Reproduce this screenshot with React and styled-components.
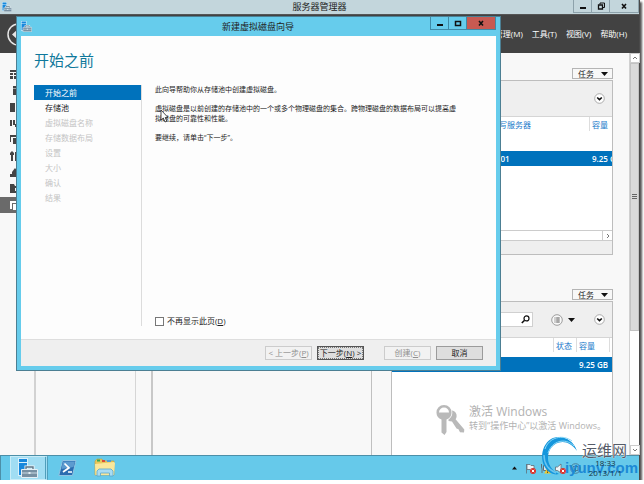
import { useState } from 'react';
import styled, { createGlobalStyle, css } from 'styled-components';

const GlobalStyle = createGlobalStyle`
    * {
        box-sizing: border-box;
    }
    body {
        margin: 0;
        background: #fff;
        color: #222;
        font-family: "Open Sans", "Noto Sans CJK SC", sans-serif;
        font-size: 8px;
        line-height: 10px;
        overflow: hidden;
    }
    button, input {
        font: inherit;
        color: inherit;
        margin: 0;
        padding: 0;
    }
    svg {
        display: block;
        flex: none;
    }
`;

const Screen = styled.div`
    position: relative;
    display: flex;
    flex-direction: column;
    height: calc(100vh - 4px);
    margin-right: 4px;
    border-right: 1px solid #4a4a4a;
    box-shadow: 2px 2px 2px #555;
`;
const TitleBar = styled.header`
    position: relative;
    flex: none;
    display: flex;
    align-items: center;
    height: 15px;
    padding-left: 2px;
    background: #c3d6dc;
    border-bottom: 1px solid #555;
`;
const WindowTitle = styled.h1`
    flex: 1;
    margin: 0;
    padding-left: 54px;
    font-size: 9px;
    line-height: 12px;
    font-weight: 400;
    text-align: center;
    color: #222;
`;
const WindowControls = styled.div`
    display: flex;
    align-self: flex-start;
    height: 13px;
    border: 1px solid ${({ $line }) => $line};
    border-top: 0;
`;
const ControlButton = styled.button`
    display: flex;
    align-items: center;
    justify-content: center;
    width: ${({ $wide }) => ($wide ? 28 : 18)}px;
    border: 0;
    border-right: 1px solid ${({ $line }) => $line};
    background: ${({ $close }) => ($close ? '#c75a52' : 'transparent')};

    &:last-child {
        border-right: 0;
    }
`;
const MenuBar = styled.nav`
    flex: none;
    display: flex;
    align-items: center;
    justify-content: space-between;
    height: 38px;
    padding: 0 12px 0 7px;
    background: #424242;
    color: #fff;
`;
const BackButton = styled.button`
    border: 0;
    background: none;
`;
const MenuList = styled.div`
    display: flex;
    gap: 9px;
`;
const MenuItem = styled.button`
    border: 0;
    background: none;
`;

const Workspace = styled.main`
    flex: 1;
    min-height: 0;
    display: flex;
    background: #f8f8f8;
`;
const Sidebar = styled.aside`
    flex: none;
    width: 34px;
    padding-top: 13px;
`;
const SidebarButton = styled.button`
    display: flex;
    align-items: center;
    width: 100%;
    height: 16px;
    padding-left: 10px;
    border: 0;
    background: ${({ $active }) => ($active ? '#6a6a6a' : 'transparent')};
    color: ${({ $active }) => ($active ? '#fff' : '#444')};
    margin-bottom: ${({ $gap }) => ($gap ? 1 : 0)}px;
`;
const PageNav = styled.div`
    flex: none;
    width: 102px;
    margin-right: 15px;
    border-left: 2px solid #d2d2d2;
    border-right: 1px solid #d6d6d6;
`;
const VolumesPane = styled.section`
    width: 0;
    flex: 109;
    margin-right: 19px;
    border-left: 2px solid #c8c8c8;
    border-right: 1px solid #c0c0c0;
`;
const DetailsPane = styled.div`
    flex: 111;
    min-width: 0;
    display: flex;
    flex-direction: column;
    padding-top: 15px;
    margin-right: 16px;
`;
const TaskButton = styled.button`
    flex: none;
    align-self: flex-end;
    display: flex;
    align-items: center;
    justify-content: space-between;
    width: 41px;
    height: 11px;
    padding: 0 4px 0 5px;
    margin-bottom: 1px;
    border: 1px solid #b5b5b5;
    background: #f8f8f8;
`;
const Panel = styled.section`
    display: flex;
    flex-direction: column;
    border: 1px solid #bdbdbd;
    background: #fff;

    ${({ $grow }) => ($grow ? css`
        flex: 1;
        border-bottom: 0;
    ` : css`
        flex: none;
        height: 175px;
        margin-bottom: 34px;
    `)}
`;
const PanelHeader = styled.div`
    flex: none;
    display: flex;
    align-items: center;
    justify-content: flex-end;
    height: 36px;
    padding-right: 7px;
    background: #efefef;
    border-bottom: 1px solid #d5d5d5;
`;
const SearchBox = styled.label`
    flex: 1;
    display: flex;
    align-items: center;
    height: 15px;
    margin: 0 18px 0 8px;
    padding-right: 2px;
    border: 1px solid #d0d0d0;
    background: #fff;
`;
const SearchInput = styled.input`
    flex: 1;
    min-width: 0;
    border: 0;
    background: none;
    outline: 0;
`;
const IconButton = styled.button`
    border: 0;
    background: none;
    margin-right: ${({ $space }) => $space || 0}px;
`;
const TableArea = styled.div`
    flex: 1;
    overflow: hidden;
`;
const Table = styled.table`
    width: 100%;
    table-layout: fixed;
    border-collapse: collapse;
`;
const HeadCell = styled.th`
    height: ${({ $tall }) => ($tall ? 34 : 19)}px;
    width: ${({ $width }) => ($width ? `${$width}px` : 'auto')};
    padding: 3px 0 0 3px;
    vertical-align: top;
    text-align: left;
    font-weight: 400;
    white-space: nowrap;
    color: #1979ca;
    background: linear-gradient(#ddd, #ddd) left top / 1px 14px no-repeat;
`;
const Cell = styled.td`
    height: 15px;
    padding: 0 0 0 3px;
    white-space: nowrap;
    font-weight: 600;
    color: #fff;
    background: #0072bc;
`;
const HorizontalScroll = styled.div`
    flex: none;
    display: flex;
    justify-content: flex-end;
    height: 11px;
    border-top: 1px solid #ccc;
    border-bottom: 1px solid #ccc;
`;
const ScrollButton = styled.button`
    flex: none;
    display: flex;
    align-items: center;
    justify-content: center;
    width: 10px;
    height: ${({ $side }) => ($side ? 9 : 10)}px;
    border: 1px solid #ccc;
    border-width: ${({ $side }) => ($side ? '0 0 0 1px' : '1px')};
    background: #fff;
`;
const PanelFooter = styled.div`
    flex: none;
    height: 13px;
    background: #efefef;
`;
const VerticalScroll = styled.div`
    flex: none;
    display: flex;
    flex-direction: column;
    width: 10px;
    border-left: 1px solid #d0d0d0;
    background: #fff;
`;
const ScrollThumb = styled.div`
    flex: 267;
    display: flex;
    align-items: center;
    justify-content: center;
    background: #dadada;
    border: 1px solid #c2c2c2;
`;
const ScrollTrack = styled.div`
    flex: 114;
`;

const Dialog = styled.div`
    position: absolute;
    top: 17px;
    left: 17px;
    right: 139px;
    bottom: 110px;
    display: flex;
    flex-direction: column;
    padding: 0 4px 4px;
    background: #66ccec;
    box-shadow: 0 0 0 1px #4c7f93;
`;
const DialogTitleBar = styled.header`
    position: relative;
    flex: none;
    display: flex;
    align-items: center;
    height: 19px;
`;
const DialogBody = styled.div`
    flex: 1;
    min-height: 0;
    display: flex;
    flex-direction: column;
    background: #fdfdfd;
    padding: 13px;
`;
const PageHeading = styled.h2`
    margin: 0 0 14px;
    font-size: 15px;
    line-height: 22px;
    font-weight: 400;
    color: #0f789b;
`;
const WizardColumns = styled.div`
    flex: 1;
    min-height: 0;
    display: flex;
`;
const StepList = styled.ol`
    flex: none;
    width: 108px;
    margin: 0 13px 0 0;
    padding: 0;
    list-style: none;
    border-right: 1px solid #dcdcdc;
`;
const Step = styled.li`
    height: 15px;
    line-height: 15px;
    padding-left: 11px;
    color: ${({ $state }) => ({ active: '#fff', ready: '#222' }[$state] || '#c4c4c4')};
    background: ${({ $state }) => ($state === 'active' ? '#0072bc' : 'transparent')};
`;
const StepContent = styled.div`
    flex: 1;
    display: flex;
    flex-direction: column;
    justify-content: space-between;
`;
const Text = styled.p`
    margin: 0 0 9px;
    font-size: 7px;
    line-height: 10px;
    white-space: nowrap;
`;
const SkipLabel = styled.label`
    display: flex;
    align-items: center;
    gap: 3px;
`;
const Checkbox = styled.input`
    appearance: none;
    width: 9px;
    height: 9px;
    border: 1px solid #777;
    background: ${({ checked }) => (checked ? '#0072bc' : '#fff')};
`;
const DialogFooter = styled.footer`
    flex: none;
    display: flex;
    align-items: center;
    justify-content: flex-end;
    gap: 5px;
    height: 27px;
    padding-right: 13px;
    background: #efefef;
    border-top: 1px solid #dedede;
`;
const FooterButton = styled.button`
    width: 47px;
    height: 14px;
    white-space: nowrap;
    line-height: 10px;
    border: 1px solid #9b9b9b;
    background: #dedede;
    margin-left: ${({ $apart }) => ($apart ? 15 : 0)}px;
    ${({ $primary }) => $primary && css`
        border-color: #555;
        outline: 1px dotted #777;
        outline-offset: -2px;
    `}

    &:disabled {
        border-color: #ccc;
        background: #f2f2f2;
        color: #8f8f8f;
    }
`;
const Pointer = styled.svg`
    position: absolute;
    left: 143px;
    top: 92px;
`;

const Activation = styled.div`
    position: absolute;
    right: 33px;
    bottom: 44px;
    display: flex;
    align-items: flex-start;
    gap: 3px;
    color: #b2b2b2;
`;
const ActivationTitle = styled.div`
    font-size: 12px;
    line-height: 16px;
`;
const ActivationText = styled.div`
    font-size: 9px;
    line-height: 12px;
    white-space: nowrap;
`;

const Taskbar = styled.footer`
    flex: none;
    display: flex;
    align-items: stretch;
    height: 25px;
    padding: 0 17px 0 9px;
    background: #66c9ea;
    border-top: 1px solid #4c8fa8;
    border-left: 1px solid #4c8fa8;
`;
const TaskbarButton = styled.button`
    display: flex;
    align-items: center;
    justify-content: center;
    width: 38px;
    border: 0;
    background: none;
    ${({ $active }) => $active && css`
        border: 1px solid #c7ecf8;
        border-right: 3px double #4f9fbc;
        background: #a0ddf3;
    `}
`;
const Tray = styled.div`
    display: flex;
    align-items: center;
    gap: 4px;
    margin-left: auto;
`;
const Clock = styled.time`
    position: relative;
    z-index: 1;
    margin-left: 4px;
    text-align: center;
    color: #17313c;
`;
const SiteBadge = styled.div`
    position: absolute;
    right: 1px;
    bottom: 4px;
    display: flex;
    align-items: flex-end;
`;
const SiteWords = styled.div`
    margin-left: -14px;
    text-shadow: 0 0 1px #fff, 0 0 1px #fff;
`;
const SiteName = styled.div`
    padding-left: 17px;
    font-size: 15px;
    line-height: 18px;
    color: #555b68;
`;
const SiteHost = styled.div`
    font-family: "Liberation Sans", sans-serif;
    font-size: 15px;
    line-height: 17px;
    font-weight: 700;
    color: #1c8ad6;
    text-shadow: none;
`;

const ServerIcon = ({ size }) => (
    <svg width={size} height={size} viewBox="0 0 20 20">
        <path d="M0 0h10v18H0z" fill="#d8f0fb" />
        <path d="M1 1h8v3H1zM1 5h8v12H1z" fill="#1888dc" />
        <path d="M8 12V9h7v3" fill="none" stroke="#f0f6f9" strokeWidth="3" />
        <path d="M8 12V9h7v3" fill="none" stroke="#5d7587" strokeWidth="1.4" />
        <path d="M3.500 11.500h16v8h-16z" fill="#7890a2" stroke="#e4eff5" />
        <path d="M4 15h15" stroke="#c9d9e2" />
        <path d="M10.500 14h2v2h-2z" fill="#e4eff5" />
    </svg>
);

const MinimizeIcon = () => (
    <svg width="8" height="8" viewBox="0 0 8 8"><path d="M1 5h6v2H1z" fill="#111" /></svg>
);
const MaximizeIcon = () => (
    <svg width="8" height="8" viewBox="0 0 8 8"><path d="M1.500 2.500h5v4h-5z" fill="none" stroke="#111" strokeWidth="1.5" /></svg>
);
const RestoreIcon = () => (
    <svg width="8" height="8" viewBox="0 0 8 8" fill="none" stroke="#111">
        <path d="M3 2.500V1h4.500v4.500H6" />
        <path d="M1.500 3h4v4h-4z" strokeWidth="1.300" />
    </svg>
);
const CloseIcon = () => (
    <svg width="8" height="8" viewBox="0 0 8 8"><path d="M2 2l4 4.500M6 2L2 6.500" stroke="#111" strokeWidth="1.600" /></svg>
);
const Triangle = ({ up }) => (
    <svg width={up ? 5 : 7} height="4" viewBox="0 0 7 4"><path d={up ? 'M0 4h7L3.500 0z' : 'M0 0h7L3.500 4z'} fill="#111" /></svg>
);
const Arrow = ({ d }) => (
    <svg width="6" height="6" viewBox="0 0 6 6"><path d={d} fill="none" stroke="#777" /></svg>
);
const CircleChevron = () => (
    <svg width="11" height="11" viewBox="0 0 11 11">
        <circle cx="5.500" cy="5.500" r="4.800" fill="#fff" stroke="#999" strokeWidth=".8" />
        <path d="M3.200 4.500l2.300 2.200 2.300-2.200" fill="none" stroke="#111" strokeWidth="1.600" />
    </svg>
);
const ListIcon = () => (
    <svg width="12" height="12" viewBox="0 0 12 12">
        <circle cx="6" cy="6" r="5.300" fill="#f8f8f8" stroke="#888" strokeWidth=".8" />
        <path d="M3.500 4h1M5.200 4h3.500M3.500 6h1M5.200 6h3.500M3.500 8h1M5.200 8h3.500" stroke="#555" />
    </svg>
);
const SearchIcon = () => (
    <svg width="9" height="9" viewBox="0 0 9 9" fill="none" stroke="#111">
        <circle cx="5.500" cy="3.400" r="2.500" strokeWidth="1.200" />
        <path d="M3.600 5.200L.8 8" strokeWidth="1.600" />
    </svg>
);

const sidebarShapes = [
    'M0 1h12v2H0zM0 4h3v2H0zM4 4h8v2H4zM0 7h3v3H0zM4 7h8v3H4z',
    'M3 1h8v2H3zM3 3.500h8V10H3z',
    'M0 1h5v9H0zM6 2h6v8H6z',
    'M0 2h2v6H0zM3 2h2v5H3zM6 1h5v4H6zM5 6h4v3H5z',
    'M0 1h7v2H1v5H0zM3 4h8v6H3z',
    'M0 2l2-2 2 2v2H3v6H1V4H0zM5 1h2v9H5z',
    'M2 5l3-4 3 4v2H2zM0 7h11v3H0z',
    'M0 1h4l1 2h6v7H0zm5 4v3h2V5z',
    'M0 1h7v2H2v6H0zM3 4h8v6H3z',
];

const KeysIcon = () => (
    <svg width="30" height="32" viewBox="0 0 30 32" fill="#b9b9b9">
        <path d="M8 1a7.500 7.500 0 0 1 7.500 8c0 3-2 5.500-5 6.500V28l-2 3-3-2.500V15.500C2.500 14.500.5 12 .5 9A7.500 7.500 0 0 1 8 1zm-5 7.500h10a5 5 0 0 0-10 0z" fillRule="evenodd" />
        <path d="M16 6.500c3 .5 5 3 4.600 6-.1 1-.4 2-1 2.800l8.700 10.200-.3 3-4-.3-1.500-3-2-.7-4.500-7-3.500-.5v-1.500c3-2 4.500-5 3.500-9z" />
    </svg>
);

const PowerShellIcon = () => (
    <svg width="19" height="16" viewBox="0 0 19 16">
        <path d="M4.500.5h13.500l-3.500 15H.8z" fill="#2b6cb0" stroke="#8fc3e2" />
        <path d="M5 1.500h12L15.500 7 3.500 9z" fill="#5d9bcf" />
        <path d="M6.500 3.500l4.500 4.300-6 4.200M10 12h4" fill="none" stroke="#fff" strokeWidth="1.700" />
    </svg>
);
const FolderIcon = () => (
    <svg width="22" height="20" viewBox="0 0 22 20">
        <path d="M1 3l2-2h5l1 2h11v14H1z" fill="#e8c75b" stroke="#c39d3c" strokeWidth=".6" />
        <path d="M3 1.500h3v2H3z" fill="#35a853" /><path d="M8 2h3v2H8z" fill="#d84c3a" /><path d="M13 2h4v2h-4z" fill="#4b9cdc" />
        <path d="M1 6l19-2 1 1-1 12H1.500z" fill="#fae79b" />
        <path d="M3 18v-5l2-2h12l2 2v5h-3.500v-3h-9v3z" fill="#a9dcf3" stroke="#5aa6cb" strokeWidth=".8" />
    </svg>
);

const ErrorMark = () => (
    <>
        <circle cx="8" cy="8" r="3" fill="#d9322b" />
        <path d="M6.800 6.800l2.400 2.400M9.200 6.800L6.800 9.200" stroke="#fff" />
    </>
);
const FlagIcon = () => (
    <svg width="11" height="11" viewBox="0 0 11 11">
        <path d="M1.500 1v9.500M2 1.500h3l1 1h3v5H6l-1-1H2z" fill="#eef4f7" stroke="#5f6f78" strokeWidth=".8" />
        <ErrorMark />
    </svg>
);
const NetworkIcon = () => (
    <svg width="11" height="11" viewBox="0 0 11 11">
        <path d="M3.500 2.500h6v5h-6zM5 9.500h4M1.500 1v3c0 1 .5 1 .5 2v4" fill="#dce6eb" stroke="#5f6f78" />
        <path d="M7.500 4.500l3.300 6H4.200z" fill="#f5c927" />
        <path d="M7.500 6.500v2M7.500 9v1" stroke="#333" strokeWidth=".8" />
    </svg>
);
const SpeakerIcon = () => (
    <svg width="11" height="11" viewBox="0 0 11 11">
        <path d="M.5 4h2l3.500-3v9L2.500 7.500h-2z" fill="#eef4f7" stroke="#5f6f78" strokeWidth=".8" />
        <ErrorMark />
    </svg>
);
const InputIcon = () => (
    <svg width="11" height="11" viewBox="0 0 11 11" fill="none" stroke="#4b7e98">
        <circle cx="5.500" cy="5.500" r="4.800" /><path d="M3 3.500h5v4H3zM5.500 2v7" />
    </svg>
);
const SwirlLogo = () => (
    <svg width="38" height="41" viewBox="0 0 38 41">
        <path d="M36 16C32 4 20-1 10 4-1 11-2 29 8 37c3 2 7 3 10 2C7 34 4 22 10 13 16 5 28 4 36 16z" fill="#1596dc" />
        <path d="M31 6C22-1 8 2 4 14M33 11C24 2 11 6 7 18" fill="none" stroke="#8ed9f7" strokeWidth="1" />
        <path d="M3 20c0 9 5 15 12 18" fill="none" stroke="#68c4ef" strokeWidth="1.500" />
    </svg>
);

const steps = [
    { name: '开始之前', state: 'active' },
    { name: '存储池', state: 'ready' },
    { name: '虚拟磁盘名称' },
    { name: '存储数据布局' },
    { name: '设置' },
    { name: '大小' },
    { name: '确认' },
    { name: '结果' },
];

const menus = ['管理(M)', '工具(T)', '视图(V)', '帮助(H)'];

const Tasks = () => (
    <TaskButton type="button">任务 <Triangle /></TaskButton>
);

const ServerManager = () => (
    <>
        <TitleBar>
            <ServerIcon size={10} />
            <WindowTitle>服务器管理器</WindowTitle>
            <WindowControls $line="#8da2ab">
                <ControlButton type="button" aria-label="最小化" $line="#8da2ab"><MinimizeIcon /></ControlButton>
                <ControlButton type="button" aria-label="还原" $line="#8da2ab"><RestoreIcon /></ControlButton>
                <ControlButton type="button" aria-label="关闭" $wide><CloseIcon /></ControlButton>
            </WindowControls>
        </TitleBar>
        <MenuBar>
            <BackButton type="button" aria-label="后退">
                <svg width="23" height="23" viewBox="0 0 23 23">
                    <circle cx="11.500" cy="11.500" r="10.500" fill="none" stroke="#e5e5e5" strokeWidth="1.500" />
                    <path d="M5 11.500l6-5.500v4h7v3h-7v4z" fill="#e5e5e5" />
                </svg>
            </BackButton>
            <MenuList>
                {menus.map((menu) => <MenuItem type="button" key={menu}>{menu}</MenuItem>)}
            </MenuList>
        </MenuBar>
        <Workspace>
            <Sidebar>
                {sidebarShapes.map((d, index) => (
                    <SidebarButton
                        type="button"
                        key={d}
                        aria-label={`页面 ${index + 1}`}
                        $active={index === 8}
                        $gap={index % 3 === 1}
                    >
                        <svg width="12" height="11" viewBox="0 0 12 11"><path d={d} fill="currentColor" /></svg>
                    </SidebarButton>
                ))}
            </Sidebar>
            <PageNav />
            <VolumesPane />
            <DetailsPane>
                <Tasks />
                <Panel>
                    <PanelHeader>
                        <IconButton type="button" aria-label="展开"><CircleChevron /></IconButton>
                    </PanelHeader>
                    <TableArea>
                        <Table>
                            <thead>
                                <tr>
                                    <HeadCell $tall />
                                    <HeadCell $tall $width={101}>读写服务器</HeadCell>
                                    <HeadCell $tall $width={23}>容量</HeadCell>
                                </tr>
                            </thead>
                            <tbody>
                                <tr>
                                    <Cell />
                                    <Cell>SC01</Cell>
                                    <Cell>9.25 GB</Cell>
                                </tr>
                            </tbody>
                        </Table>
                    </TableArea>
                    <HorizontalScroll>
                        <ScrollButton type="button" aria-label="向右" $side><Arrow d="M2 1l2 2-2 2" /></ScrollButton>
                    </HorizontalScroll>
                    <PanelFooter />
                </Panel>
                <Tasks />
                <Panel $grow>
                    <PanelHeader>
                        <SearchBox>
                            <SearchInput type="text" aria-label="筛选" />
                            <SearchIcon />
                        </SearchBox>
                        <IconButton type="button" aria-label="列表" $space={5}><ListIcon /></IconButton>
                        <IconButton type="button" aria-label="列表选项" $space={19}><Triangle /></IconButton>
                        <IconButton type="button" aria-label="展开"><CircleChevron /></IconButton>
                    </PanelHeader>
                    <TableArea>
                        <Table>
                            <thead>
                                <tr>
                                    <HeadCell />
                                    <HeadCell $width={23}>状态</HeadCell>
                                    <HeadCell $width={33}>容量</HeadCell>
                                    <HeadCell $width={3} />
                                </tr>
                            </thead>
                            <tbody>
                                <tr>
                                    <Cell>虚拟磁盘 (存储空间 物理磁盘)</Cell>
                                    <Cell />
                                    <Cell>9.25 GB</Cell>
                                    <Cell />
                                </tr>
                            </tbody>
                        </Table>
                    </TableArea>
                </Panel>
            </DetailsPane>
            <VerticalScroll>
                <ScrollButton type="button" aria-label="向上"><Arrow d="M1 4l2-2 2 2" /></ScrollButton>
                <ScrollThumb>
                    <svg width="5" height="6" viewBox="0 0 5 6"><path d="M0 .5h5M0 2.500h5M0 4.500h5" stroke="#666" /></svg>
                </ScrollThumb>
                <ScrollTrack />
                <ScrollButton type="button" aria-label="向下"><Arrow d="M1 2l2 2 2-2" /></ScrollButton>
            </VerticalScroll>
        </Workspace>
    </>
);

const WizardDialog = () => {
    const [skip, setSkip] = useState(false);

    return (
        <Dialog role="dialog" aria-labelledby="wizard-title">
            <DialogTitleBar>
                <ServerIcon size={11} />
                <WindowTitle id="wizard-title">新建虚拟磁盘向导</WindowTitle>
                <WindowControls $line="#3f8aa6">
                    <ControlButton type="button" aria-label="最小化" $line="#3f8aa6"><MinimizeIcon /></ControlButton>
                    <ControlButton type="button" aria-label="最大化" $line="#3f8aa6"><MaximizeIcon /></ControlButton>
                    <ControlButton type="button" aria-label="关闭" $wide $close><CloseIcon /></ControlButton>
                </WindowControls>
            </DialogTitleBar>
            <DialogBody>
                <PageHeading>开始之前</PageHeading>
                <WizardColumns>
                    <StepList>
                        {steps.map(({ name, state }) => <Step key={name} $state={state}>{name}</Step>)}
                    </StepList>
                    <StepContent>
                        <div>
                            <Text>此向导帮助你从存储池中创建虚拟磁盘。</Text>
                            <Text>
                                虚拟磁盘是以前创建的存储池中的一个或多个物理磁盘的集合。跨物理磁盘的数据布局可以提高虚
                                <br />
                                拟磁盘的可靠性和性能。
                            </Text>
                            <Text>要继续，请单击“下一步”。</Text>
                        </div>
                        <SkipLabel>
                            <Checkbox type="checkbox" checked={skip} onChange={() => setSkip(!skip)} />
                            <span>不再显示此页(<u>D</u>)</span>
                        </SkipLabel>
                    </StepContent>
                </WizardColumns>
            </DialogBody>
            <DialogFooter>
                <FooterButton type="button" disabled>&lt; 上一步(<u>P</u>)</FooterButton>
                <FooterButton type="button" $primary>下一步(<u>N</u>) &gt;</FooterButton>
                <FooterButton type="button" disabled $apart>创建(<u>C</u>)</FooterButton>
                <FooterButton type="button">取消</FooterButton>
            </DialogFooter>
            <Pointer width="9" height="14" viewBox="0 0 9 14">
                <path d="M1 1v10l2.300-2 1.700 4 1.800-.8L5.200 8.500H8z" fill="#fff" stroke="#222" strokeWidth=".8" />
            </Pointer>
        </Dialog>
    );
};

const App = () => (
    <>
        <GlobalStyle />
        <Screen>
            <ServerManager />
            <Taskbar>
                <TaskbarButton type="button" aria-label="服务器管理器" $active><ServerIcon size={20} /></TaskbarButton>
                <TaskbarButton type="button" aria-label="PowerShell"><PowerShellIcon /></TaskbarButton>
                <TaskbarButton type="button" aria-label="文件资源管理器"><FolderIcon /></TaskbarButton>
                <Tray>
                    <Triangle up />
                    <span />
                    <FlagIcon />
                    <NetworkIcon />
                    <SpeakerIcon />
                    <InputIcon />
                    <Clock>18:33<br />2013/1/1</Clock>
                </Tray>
            </Taskbar>
            <WizardDialog />
            <Activation>
                <KeysIcon />
                <div>
                    <ActivationTitle>激活 Windows</ActivationTitle>
                    <ActivationText>转到“操作中心”以激活 Windows。</ActivationText>
                </div>
            </Activation>
            <SiteBadge>
                <SwirlLogo />
                <SiteWords>
                    <SiteName>运维网</SiteName>
                    <SiteHost>iyunv.com</SiteHost>
                </SiteWords>
            </SiteBadge>
        </Screen>
    </>
);

export default App;
